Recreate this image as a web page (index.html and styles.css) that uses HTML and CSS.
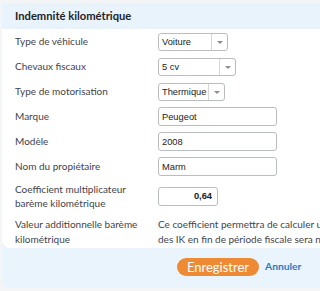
FILE: index.html
```html
<!DOCTYPE html>
<html>
    <head>
        <meta charset="utf-8">
        <title>Indemnité kilométrique</title>
        <link rel="stylesheet" href="styles.css">
    </head>
    <body>
        <div class="fiche">
            <div class="entete">Indemnité kilométrique</div>
            <div class="corps">
                <div class="ligne">
                    <span class="libelle">Type de véhicule</span>
                    <div class="liste liste_voiture"><span>Voiture</span><i class="fleche"></i></div>
                </div>
                <div class="ligne">
                    <span class="libelle">Chevaux fiscaux</span>
                    <div class="liste liste_cv"><span>5 cv</span><i class="fleche"></i></div>
                </div>
                <div class="ligne">
                    <span class="libelle">Type de motorisation</span>
                    <div class="liste liste_moteur"><span>Thermique</span><i class="fleche"></i></div>
                </div>
                <div class="ligne">
                    <span class="libelle">Marque</span>
                    <input class="champ" type="text" value="Peugeot">
                </div>
                <div class="ligne">
                    <span class="libelle">Modèle</span>
                    <input class="champ" type="text" value="2008">
                </div>
                <div class="ligne">
                    <span class="libelle">Nom du propiétaire</span>
                    <input class="champ" type="text" value="Marm">
                </div>
                <div class="ligne ligne_haute">
                    <span class="libelle">Coefficient multiplicateur<br>barème kilométrique</span>
                    <input class="champ champ_nombre" type="text" value="0,64">
                </div>
                <div class="ligne ligne_texte">
                    <span class="libelle">Valeur additionnelle barème<br>kilométrique</span>
                    <span class="aide">Ce coefficient permettra de calculer une valeur additionnelle<br>des IK en fin de période fiscale sera nécessaire</span>
                </div>
            </div>
            <div class="actions">
                <button type="button" class="bouton">Enregistrer</button>
                <a class="annuler">Annuler</a>
            </div>
        </div>
    </body>
</html>
```

FILE: styles.css
```css
body{
    margin: 0;
    background: #f4f5f7;
    font-family: "Lato", "Liberation Sans", sans-serif;
    overflow: hidden;
}
.fiche{
    margin: 3px 0 0 2px;
    width: 420px;
    background: #eaf4fc;
    border-radius: 0 0 8px 8px;
    padding-bottom: 2px;
}
.entete{
    height: 26px;
    line-height: 26px;
    padding-left: 13px;
    font-size: 11.2px;
    font-weight: 700;
    color: #1f2328;
    background: #e9f3fc;
}
.corps{
    background: white;
    border-radius: 0 0 8px 8px;
    padding-bottom: 2px;
}
.ligne{
    display: grid;
    grid-template-columns: 143px auto;
    align-items: center;
    height: 25px;
    padding-left: 13px;
    white-space: nowrap;
}
.ligne_haute{
    height: 34px;
}
.ligne_texte{
    height: auto;
    padding-top: 4px;
    align-items: start;
}
.libelle, .aide{
    font-size: 10px;
    line-height: 14.5px;
    color: #3f434a;
}
.liste{
    display: flex;
    justify-content: space-between;
    height: 18px;
    box-sizing: border-box;
    border: 1px solid #b9bcc0;
    border-radius: 3px;
    font-family: "Liberation Sans", sans-serif;
    font-size: 9.3px;
    color: #222;
}
.liste span{
    line-height: 16px;
    padding-left: 3px;
}
.fleche{
    position: relative;
    width: 15px;
    border-left: 1px solid #d4d6d9;
}
.fleche:after{
    content: "";
    position: absolute;
    left: 5px;
    top: 7px;
    border-left: 3px solid transparent;
    border-right: 3px solid transparent;
    border-top: 3px solid #8a8d91;
}
.liste_voiture{
    width: 70px;
}
.liste_cv{
    width: 78px;
}
.liste_moteur{
    width: 67px;
}
.champ{
    width: 119px;
    height: 19px;
    box-sizing: border-box;
    margin: 0;
    padding: 0 3px;
    border: 1px solid #b9bcc0;
    border-radius: 3px;
    font-family: "Liberation Sans", sans-serif;
    font-size: 9.3px;
    color: #222;
    outline: none;
}
.champ_nombre{
    width: 60px;
    text-align: right;
    padding-right: 5px;
    font-weight: bold;
}
.actions{
    display: flex;
    align-items: center;
    height: 38px;
    padding-left: 175px;
}
.bouton{
    width: 82px;
    height: 18px;
    padding: 0;
    border: none;
    border-radius: 9px;
    background: #ef8a34;
    color: white;
    font-family: "Lato", "Liberation Sans", sans-serif;
    font-size: 13px;
    line-height: 18px;
}
.annuler{
    margin: -3px 0 0 6px;
    font-size: 10.3px;
    font-weight: 700;
    color: #2a7cc7;
}
```
